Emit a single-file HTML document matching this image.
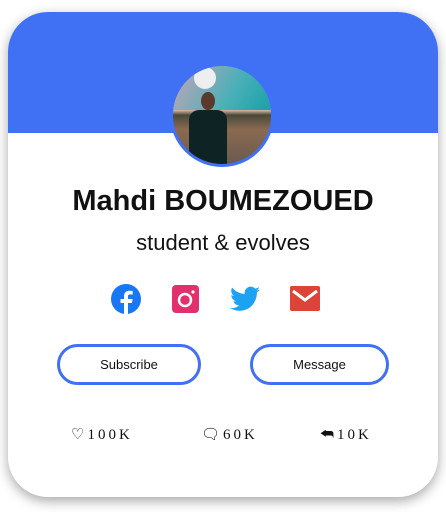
<!DOCTYPE html>
<html><head><style>
body{margin:0;width:446px;height:512px;background:#fff;font-family:"Liberation Sans",sans-serif;position:relative;overflow:hidden}
.card{position:absolute;left:8px;top:12px;width:430px;height:485px;border-radius:40px;background:#fff;overflow:hidden;box-shadow:0 4px 12px rgba(0,0,0,.35)}
.top{position:absolute;left:0;top:0;width:430px;height:121px;background:#4070f4}
.av{position:absolute;left:162px;top:51px;width:98px;height:98px;border-radius:50%;border:3px solid #4070f4;overflow:hidden;
background:linear-gradient(180deg,#7fb8c8 0%,#9fb5c4 30%,#d7b8a8 45%,#4a4a3a 50%,#8a6a50 65%,#6a5a50 100%)}
.av .s{position:absolute;left:0;top:0;width:100%;height:45%;background:linear-gradient(120deg,#c9a4b6 0%,#4ab0b8 60%,#1aa0a8 100%)}
.av .p{position:absolute;left:16px;top:44px;width:38px;height:60px;background:#0e2424;border-radius:10px 10px 0 0}
.av .h{position:absolute;left:28px;top:26px;width:14px;height:18px;background:#5a3a2a;border-radius:50%}
.av .l{position:absolute;left:21px;top:1px;width:22px;height:22px;background:#eee;border-radius:50%}
h1{position:absolute;left:0;width:430px;top:172px;margin:0;line-height:34px;text-align:center;font-size:29px;font-weight:bold;color:#111}
.sub{position:absolute;left:0;width:430px;top:218px;line-height:26px;text-align:center;font-size:22px;color:#111}
.ic{position:absolute;top:271px}
.btn{position:absolute;top:332px;height:35px;border:3px solid #4070f4;border-radius:22px;text-align:center;line-height:35px;font-size:13px;color:#111}
.st{position:absolute;top:414px;line-height:18px;font-family:"Liberation Serif",serif;font-size:15px;letter-spacing:3px;color:#111}
</style></head><body>
<div class="card">
<div class="top"></div>
<div class="av"><div class="s"></div><div class="l"></div><div class="h"></div><div class="p"></div></div>
<h1>Mahdi BOUMEZOUED</h1>
<div class="sub">student &amp; evolves</div>
<svg class="ic" style="left:102px" width="32" height="32" viewBox="0 0 32 32"><circle cx="16" cy="16" r="15" fill="#1877f2"/><path d="M18 31V20h4l.6-4H18v-2.5c0-1.2.4-2 2-2h2.7V8c-.5-.1-2-.2-3.4-.2-3.3 0-5.3 2-5.3 5.5V16h-3.5v4H14v11z" fill="#fff"/></svg>
<svg class="ic" style="left:164px;top:273px" width="27" height="28" viewBox="0 0 27 28"><rect width="27" height="28" rx="4" fill="#e1306c"/><circle cx="13" cy="15" r="6" fill="none" stroke="#fff" stroke-width="2.5"/><circle cx="21" cy="7" r="1.6" fill="#fff"/></svg>
<svg class="ic" style="left:222px;top:274px" width="30" height="26" viewBox="0 0 24 20"><path d="M24 2.4a10 10 0 0 1-2.8.8A5 5 0 0 0 23.3.5a10 10 0 0 1-3.1 1.2A4.9 4.9 0 0 0 11.8 6 14 14 0 0 1 1.7.9a4.9 4.9 0 0 0 1.5 6.6 4.9 4.9 0 0 1-2.2-.6 4.9 4.9 0 0 0 3.9 4.8 4.9 4.9 0 0 1-2.2.1 4.9 4.9 0 0 0 4.6 3.4A9.9 9.9 0 0 1 0 17.2 14 14 0 0 0 7.5 19.4c9 0 14-7.5 14-14v-.6A10 10 0 0 0 24 2.4z" fill="#1da1f2"/></svg>
<svg class="ic" style="left:282px;top:274px" width="30" height="25" viewBox="0 0 30 25"><rect width="30" height="25" rx="2" fill="#db4437"/><path d="M3 5l12 9 12-9" fill="none" stroke="#fff" stroke-width="3"/></svg>
<div class="btn" style="left:49px;width:138px">Subscribe</div>
<div class="btn" style="left:242px;width:133px">Message</div>
<div class="st" style="left:63px">♡100K</div>
<div class="st" style="left:193px">🗨60K</div>
<div class="st" style="left:312px">⮪10K</div>
</div>
</body></html>
